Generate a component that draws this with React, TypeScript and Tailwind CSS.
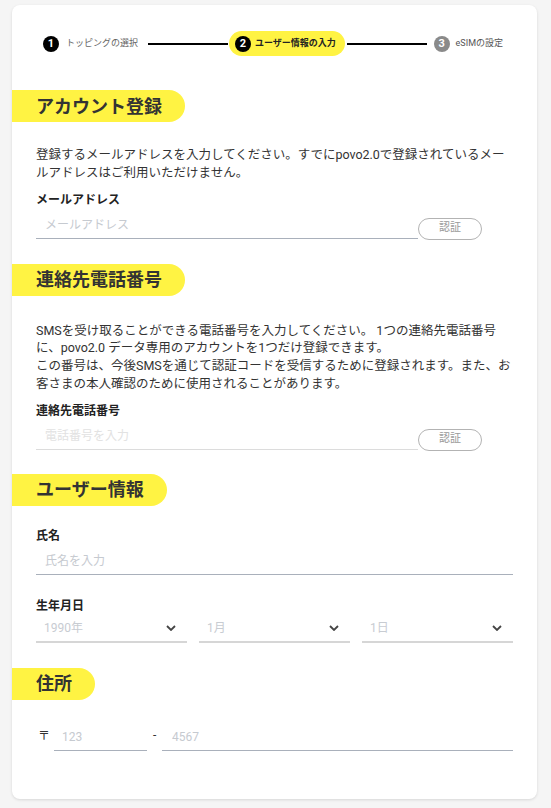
import React from "react";

const font = {
  fontFamily: 'Roboto, "Noto Sans CJK JP", "Noto Sans", sans-serif',
};

function StepDot({ n, tone }: { n: number; tone: "black" | "gray" }) {
  return (
    <span
      className={`flex h-4 w-4 shrink-0 items-center justify-center rounded-full text-[11px] font-bold leading-none text-white ${
        tone === "black" ? "bg-black" : "bg-[#8a8a8a]"
      }`}
    >
      {n}
    </span>
  );
}

function Stepper() {
  return (
    <div className="flex h-[25px] items-center pl-[7px] pr-[10px]">
      <StepDot n={1} tone="black" />
      <span className="ml-[7px] whitespace-nowrap text-[9px] text-[#666]">トッピングの選択</span>
      <div className="ml-[10px] mr-[1px] h-[2px] flex-1 bg-black" />
      <div className="flex h-[25px] items-center rounded-full bg-[#fff343] pl-[6px] pr-[9px]">
        <StepDot n={2} tone="black" />
        <span className="ml-[4px] whitespace-nowrap text-[9px] font-bold text-[#222]">ユーザー情報の入力</span>
      </div>
      <div className="ml-[2px] mr-[7px] h-[2px] flex-1 bg-black" />
      <StepDot n={3} tone="gray" />
      <span className="ml-[6px] whitespace-nowrap text-[9px] text-[#555]">eSIMの設定</span>
    </div>
  );
}

function SectionTitle({ children, className = "" }: { children: React.ReactNode; className?: string }) {
  return (
    <div className={`-ml-6 ${className}`}>
      <h2 className="inline-flex h-[32px] items-center rounded-r-full bg-[#fff343] pl-6 pr-[23px] text-[18px] font-bold text-[#333]">
        {children}
      </h2>
    </div>
  );
}

function Label({ children, className = "" }: { children: React.ReactNode; className?: string }) {
  return <p className={`text-[12px] font-bold leading-[18px] text-[#222] ${className}`}>{children}</p>;
}

function VerifyRow({ placeholder, faint }: { placeholder: string; faint?: boolean }) {
  return (
    <div className="flex items-end">
      <input
        placeholder={placeholder}
        className={`h-[30px] w-[382px] shrink-0 border-b pl-[9px] pt-[4px] text-[12px] outline-none ${
          faint
            ? "border-[#dcdcdc] placeholder:text-[#e2e2e2]"
            : "border-[#a9b0bb] placeholder:text-[#c6cad0]"
        }`}
      />
      <button className="mb-[-1px] h-[22px] w-[64px] rounded-full border border-[#b3b3b3] text-[11px] text-[#9a9a9a]">
        認証
      </button>
    </div>
  );
}

function Chevron() {
  return (
    <svg width="10" height="6" viewBox="0 0 10 6" fill="none" className="pointer-events-none">
      <polyline points="1,1 5,5 9,1" stroke="#444" strokeWidth="1.8" />
    </svg>
  );
}

function Select({ value }: { value: string }) {
  return (
    <div className="flex h-[28px] items-center justify-between border-b-2 border-[#d6d6d6] pl-[8px] pr-[11px]">
      <span className="text-[12px] text-[#c8ccd2]">{value}</span>
      <Chevron />
    </div>
  );
}

export default function App() {
  return (
    <div className="min-h-[808px] bg-[#f5f5f5] pl-[12px] pt-[5px] pb-[9px]" style={font}>
      <div className="w-[525px] rounded-[8px] bg-white px-6 pt-[26px] pb-12 shadow-[0_1px_3px_rgba(0,0,0,0.12)]">
        <Stepper />

        <SectionTitle className="mt-[34px]">アカウント登録</SectionTitle>
        <p className="mt-6 text-[12.5px] leading-[17.75px] text-[#333]">
          登録するメールアドレスを入力してください。すでにpovo2.0で登録されているメールアドレスはご利用いただけません。
        </p>
        <Label className="mt-[9px]">メールアドレス</Label>
        <VerifyRow placeholder="メールアドレス" />

        <SectionTitle className="mt-[25px]">連絡先電話番号</SectionTitle>
        <div className="mt-[26px] text-[12.5px] leading-[17.75px] text-[#333]">
          <p>
            SMSを受け取ることができる電話番号を入力してください。 1つの連絡先電話番号に、povo2.0 データ専用のアカウントを1つだけ登録できます。
          </p>
          <p>この番号は、今後SMSを通じて認証コードを受信するために登録されます。また、お客さまの本人確認のために使用されることがあります。</p>
        </div>
        <Label className="mt-[9px]">連絡先電話番号</Label>
        <VerifyRow placeholder="電話番号を入力" faint />

        <SectionTitle className="mt-6">ユーザー情報</SectionTitle>
        <Label className="mt-[21px]">氏名</Label>
        <input
          placeholder="氏名を入力"
          className="h-[30px] w-full border-b border-[#a9b0bb] pl-[9px] pt-[4px] text-[12px] outline-none placeholder:text-[#c6cad0]"
        />
        <Label className="mt-[22px]">生年月日</Label>
        <div className="grid grid-cols-3 gap-3">
          <Select value="1990年" />
          <Select value="1月" />
          <Select value="1日" />
        </div>

        <SectionTitle className="mt-[25px]">住所</SectionTitle>
        <div className="mt-[21px] flex items-end">
          <span className="mb-[6px] w-[18px] pl-[2px] text-[12px] text-[#333]">〒</span>
          <input
            placeholder="123"
            className="h-[30px] w-[93px] border-b border-[#a9b0bb] pl-[8px] pt-[4px] text-[12px] outline-none placeholder:text-[#c6cad0]"
          />
          <span className="mb-[7px] w-[15px] pl-[6px] text-[12px] text-[#333]">-</span>
          <input
            placeholder="4567"
            className="h-[30px] min-w-0 flex-1 border-b border-[#a9b0bb] pl-[10px] pt-[4px] text-[12px] outline-none placeholder:text-[#c6cad0]"
          />
        </div>
      </div>
    </div>
  );
}
